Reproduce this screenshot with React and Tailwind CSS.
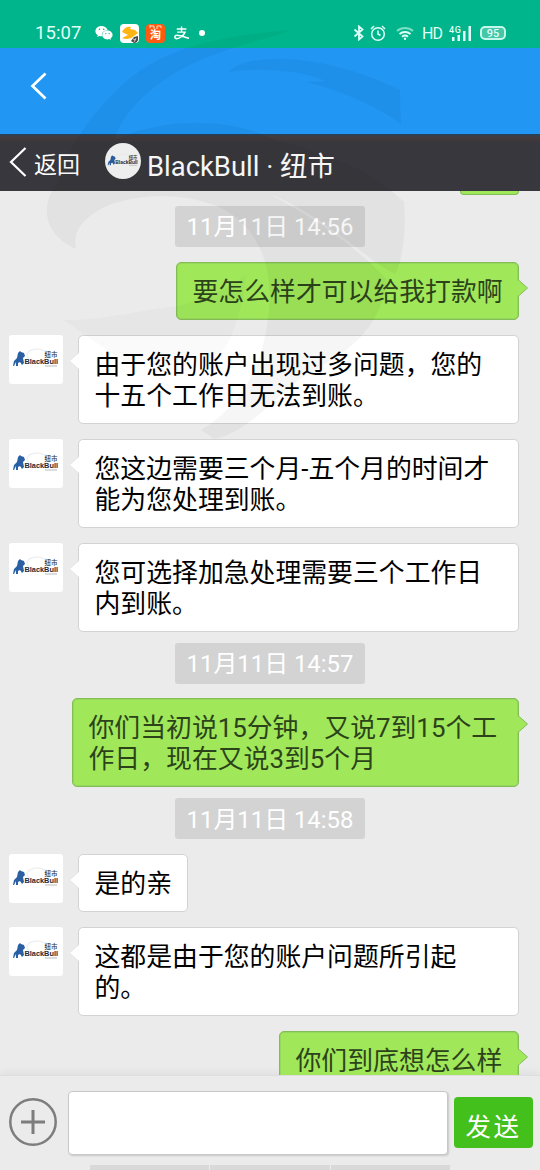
import React from "react";
import { FaWeixin } from "react-icons/fa";

const messages = [
  { type: "time", text: "11月11日 14:56" },
  { type: "sent", lines: ["要怎么样才可以给我打款啊"], width: "w-[343px]" },
  {
    type: "received",
    lines: ["由于您的账户出现过多问题，您的", "十五个工作日无法到账。"],
    width: "w-[441px]",
  },
  {
    type: "received",
    lines: ["您这边需要三个月-五个月的时间才", "能为您处理到账。"],
    width: "w-[441px]",
  },
  {
    type: "received",
    lines: ["您可选择加急处理需要三个工作日", "内到账。"],
    width: "w-[441px]",
  },
  { type: "time", text: "11月11日 14:57" },
  {
    type: "sent",
    lines: ["你们当初说15分钟，又说7到15个工", "作日，现在又说3到5个月"],
    width: "w-[447px]",
  },
  { type: "time", text: "11月11日 14:58" },
  { type: "received", lines: ["是的亲"], width: "w-[110px]" },
  {
    type: "received",
    lines: ["这都是由于您的账户问题所引起", "的。"],
    width: "w-[441px]",
  },
  { type: "sent", lines: ["你们到底想怎么样"], width: "w-[240px]" },
];

const Logo = ({ className }) => (
  <svg viewBox="0 0 54 49" className={className}>
    <ellipse cx="28" cy="20" rx="10" ry="6" fill="none" stroke="#f1f1f1" strokeWidth="1.500" />
    <path
      d="M4 31L5 26L8 23L9 18L11 16L12 17L15 18L16 21L14 23L15 28L13 30L11 27L9 28L9 31L7 31L7 27L5 31Z"
      fill="#2b5fa3"
    />
    <text x="15.500" y="29" fontSize="7.800" fontWeight="700" fill="#252b36" textLength="33.500" lengthAdjust="spacingAndGlyphs" fontFamily="Liberation Sans, sans-serif">
      BlackBull
    </text>
    <text x="35.500" y="21.500" fontSize="6.500" fontWeight="500" fill="#333" fontFamily="Noto Sans CJK SC, sans-serif">
      纽市
    </text>
    <path d="M36 31h12" stroke="#aaa" strokeWidth="0.800" />
  </svg>
);

const StatusBar = () => (
  <div className="flex h-12 items-end justify-between bg-[#00b58b] pr-[34px] pb-[5px] pl-[35px] text-[#dffff8]">
    <div className="flex h-5 items-center">
      <span className="w-[60px] text-[18.500px] leading-5 tracking-[0.100px]">15:07</span>
      <FaWeixin className="h-[18px] w-[18px] text-white" />
      <svg viewBox="0 0 19 19" className="ml-[7px] h-[19px] w-[19px]">
        <rect width="19" height="19" rx="4" fill="#fff" />
        <path d="M2 8C4 4 7 2 11 3L10 5L15 6L18 9L14 12C11 15 6 16 2 14L8 11Z" fill="#ffb514" />
        <path d="M11 17L14 13L18 12V16Q17 19 14 19Z" fill="#454b45" />
        <path d="M13 15l3 1M14 18l2-4" stroke="#ddd" strokeWidth="0.800" />
      </svg>
      <span className="relative ml-[7px] flex h-[19px] w-[19px] items-end justify-center rounded-[4px] bg-[#ff5a12] text-[11px] leading-[14px] font-bold text-white">
        淘
        <svg viewBox="0 0 19 5" className="absolute top-0 left-0 h-[5px] w-[19px]">
          <path d="M4 1v3M4 2h4v3M11 5V2h4v2" stroke="#ffe0c8" fill="none" />
        </svg>
      </span>
      <svg viewBox="0 0 18 16" className="ml-[8px] h-[14px] w-[18px]" fill="none" stroke="#fff" strokeWidth="1.700">
        <path d="M3 3.500h11M8.500 0.500v6M3.500 7h9C11 11 6 14.500 3 14.500C0 14.500 0 10.500 3.500 10.500C8 10.500 12 13 17 14" />
      </svg>
      <span className="ml-[8px] h-[6px] w-[6px] rounded-full bg-white" />
    </div>
    <div className="flex h-5 items-center">
      <svg viewBox="0 0 12 16" className="h-4 w-3" fill="none" stroke="currentColor" strokeWidth="1.800">
        <path d="M1.500 4.500l8 7L6 14.500v-13l3.500 3l-8 7" />
      </svg>
      <svg viewBox="0 0 16 17" className="ml-[5px] h-[17px] w-4" fill="none" stroke="currentColor" strokeWidth="1.500">
        <circle cx="8" cy="9" r="6.300" />
        <path d="M8 5.500V9l2.500 1.500M1 4l3-3M15 4l-3-3" />
      </svg>
      <svg viewBox="0 0 18 14" className="ml-[10px] h-[14px] w-[18px]" fill="none" stroke="currentColor" strokeWidth="1.900">
        <path d="M1 5a12 12 0 0 1 16 0" opacity="0.550" />
        <path d="M3.500 8a8.500 8.500 0 0 1 11 0" />
        <path d="M6 10.700a5 5 0 0 1 6 0" />
        <circle cx="9" cy="12.700" r="1.200" fill="currentColor" stroke="none" />
      </svg>
      <span className="ml-[8px] w-[20px] pt-px text-[16px] leading-5 tracking-[-1px]">HD</span>
      <svg viewBox="0 0 23 16" className="ml-[7px] h-4 w-[23px]" fill="currentColor">
        <text x="0" y="7.500" fontSize="9" fontWeight="500" fontFamily="Roboto, sans-serif" textLength="12">
          4G
        </text>
        <path d="M3 12h2.500v4H3zM8.500 10h2.500v6H8.500zM14 6h2.500v10H14zM19.500 1H22v15h-2.500z" />
      </svg>
      <span className="ml-[8px] flex h-[14px] w-[26px] items-center justify-center rounded-[5px] border-2 border-[#c5f7ea] bg-[#45c6a7] text-[11px] leading-none font-medium">
        95
      </span>
    </div>
  </div>
);

const Header = () => (
  <div>
    <div className="flex h-[86px] items-start bg-[#2196f3] pt-[24px] pl-[30px]">
      <svg viewBox="0 0 17 28" className="h-7 w-[17px]" fill="none" stroke="#fff" strokeWidth="2.700">
        <path d="M15.500 1.500L2.500 14L15.500 26.500" />
      </svg>
    </div>
    <div className="flex h-[57px] items-center bg-[linear-gradient(#23435f_0px,#443a3c_3px,#38373d_9px)] pl-[9px] text-white">
      <svg viewBox="0 0 18 30" className="mt-[-1px] h-[30px] w-[18px]" fill="none" stroke="#fff" strokeWidth="2.200">
        <path d="M16.500 1L2 15L16.500 29" />
      </svg>
      <span className="mt-[7px] ml-[7px] text-[23px] leading-8">返回</span>
      <span className="mt-[-3px] ml-[25px] flex h-9 w-9 items-center overflow-hidden rounded-full bg-[#f7f7f7]">
        <Logo className="h-[36px] w-9" />
      </span>
      <span className="mt-[9px] ml-[6px] text-[27.400px] leading-8 whitespace-nowrap">BlackBull · 纽市</span>
    </div>
  </div>
);

const TimeLabel = ({ text }) => (
  <div className="-mt-1 flex h-[41px] justify-center">
    <span className="flex w-[190px] items-center justify-center rounded-[3px] bg-[#d3d3d3] pt-[4px] text-[23.900px] whitespace-nowrap text-white">
      {text}
    </span>
  </div>
);

const Bubble = ({ sent, lines, width }) => (
  <div
    className={`relative rounded-[5px] border pt-[14px] pb-[11px] pl-[15.500px] text-[25.850px] leading-[31px] whitespace-nowrap ${width} ${
      sent
        ? "border-[#83bd58] bg-[#a0e75a] text-[#2c431a] shadow-[inset_0_0_0_1px_#95d85a]"
        : "border-[#d3d3d3] bg-white text-black"
    }`}
  >
    {lines.map((line) => (
      <p key={line}>{line}</p>
    ))}
    {sent ? (
      <svg viewBox="0 0 12 20" className="absolute top-[15px] -right-[11px] h-5 w-3">
        <path d="M0 1L10.500 10L0 19Z" fill="#a0e75a" />
        <path d="M1 1.500L10.500 10L1 18.500" fill="none" stroke="#83bd58" />
      </svg>
    ) : (
      <svg viewBox="0 0 12 20" className="absolute top-[15px] -left-[11px] h-5 w-3">
        <path d="M12 1L1 10L12 19Z" fill="#fff" />
        <path d="M11 1.500L1.500 10L11 18.500" fill="none" stroke="#ddd" strokeWidth="0.700" />
      </svg>
    )}
  </div>
);

const Message = ({ message }) => {
  if (message.type === "time") return <TimeLabel text={message.text} />;
  if (message.type === "sent") {
    return (
      <div className="flex justify-end pr-[21px]">
        <Bubble sent lines={message.lines} width={message.width} />
      </div>
    );
  }
  return (
    <div className="flex items-start gap-[15px] pl-[9px]">
      <div className="h-[49px] w-[54px] rounded-[3px] bg-white">
        <Logo className="h-[49px] w-[54px]" />
      </div>
      <Bubble lines={message.lines} width={message.width} />
    </div>
  );
};

const Composer = () => (
  <div className="h-[95px] shrink-0 border-t border-[#dedede] bg-[#ebebeb] shadow-[0_-2px_8px_rgba(0,0,0,0.060)]">
    <div className="flex h-[89px] items-start pt-[15px] pl-[9px]">
      <svg viewBox="0 0 48 48" className="mt-[7px] h-12 w-12" fill="none" stroke="#7d7d7d">
        <circle cx="24" cy="24" r="22.700" strokeWidth="2.500" />
        <path d="M12 24h24M24 12v24" strokeWidth="3" />
      </svg>
      <div className="ml-[11px] h-[64px] w-[380px] rounded-[4px] border border-[#c8c8c8] bg-white shadow-[1px_1px_2px_rgba(0,0,0,0.150)]" />
      <button className="mt-[6px] ml-[6px] h-[51px] w-[79px] rounded-[4px] bg-[#43c01b] pt-[8px] text-[25.500px] leading-8 tracking-[2.500px] text-white">
        发送
      </button>
    </div>
    <div className="ml-[90px] flex h-[5px] w-[360px] gap-px">
      <span className="flex-1 bg-[#d9d9d9]" />
      <span className="flex-1 bg-[#d9d9d9]" />
      <span className="flex-1 bg-[#d9d9d9]" />
    </div>
  </div>
);

// Faint eagle mark laid over the top of the screen
const Watermark = () => (
  <svg viewBox="0 0 540 1170" className="pointer-events-none absolute inset-0 h-full w-full">
    <g fill="#000" fillOpacity="0.035">
      <path d="M76 249C43 235 40 205 57 183C68 147 91 113 124 83C166 47 218 36 291 30C262 42 205 50 160 83C135 102 122 118 114 140C160 118 230 116 275 140C320 150 375 172 404 202C407 235 401 265 395 274C370 263 328 218 272 195C322 223 359 249 387 280C380 332 345 354 309 373C279 391 250 433 214 439L201 430C233 411 253 382 262 349C278 289 269 238 228 212C190 190 130 193 99 210C82 221 73 230 76 249Z" />
      <path d="M228 72C250 50 330 55 400 90L401 124C374 105 340 90 305 82L325 81C300 70 260 68 228 72Z" />
      <path d="M63 320C100 321 158 307 177 306Q224 294 246 274C243 313 230 345 216 360C180 346 150 385 110 352Z" fillOpacity="0.020" />
    </g>
  </svg>
);

const App = () => {
  return (
    <div className="relative flex h-[1170px] w-[540px] flex-col overflow-hidden bg-[#ebebeb] font-[Roboto,'Noto_Sans_CJK_SC',sans-serif]">
      <StatusBar />
      <Header />
      <div className="flex min-h-0 flex-1 flex-col gap-[14.934px] overflow-hidden">
        <div className="mr-[21px] h-1 w-[59px] shrink-0 self-end rounded-b-[5px] border border-t-0 border-[#83bd58] bg-[#a0e75a]" />
        {messages.map((message, index) => (
          <div key={index} className="shrink-0">
            <Message message={message} />
          </div>
        ))}
      </div>
      <Composer />
      <Watermark />
    </div>
  );
};

export default App;
